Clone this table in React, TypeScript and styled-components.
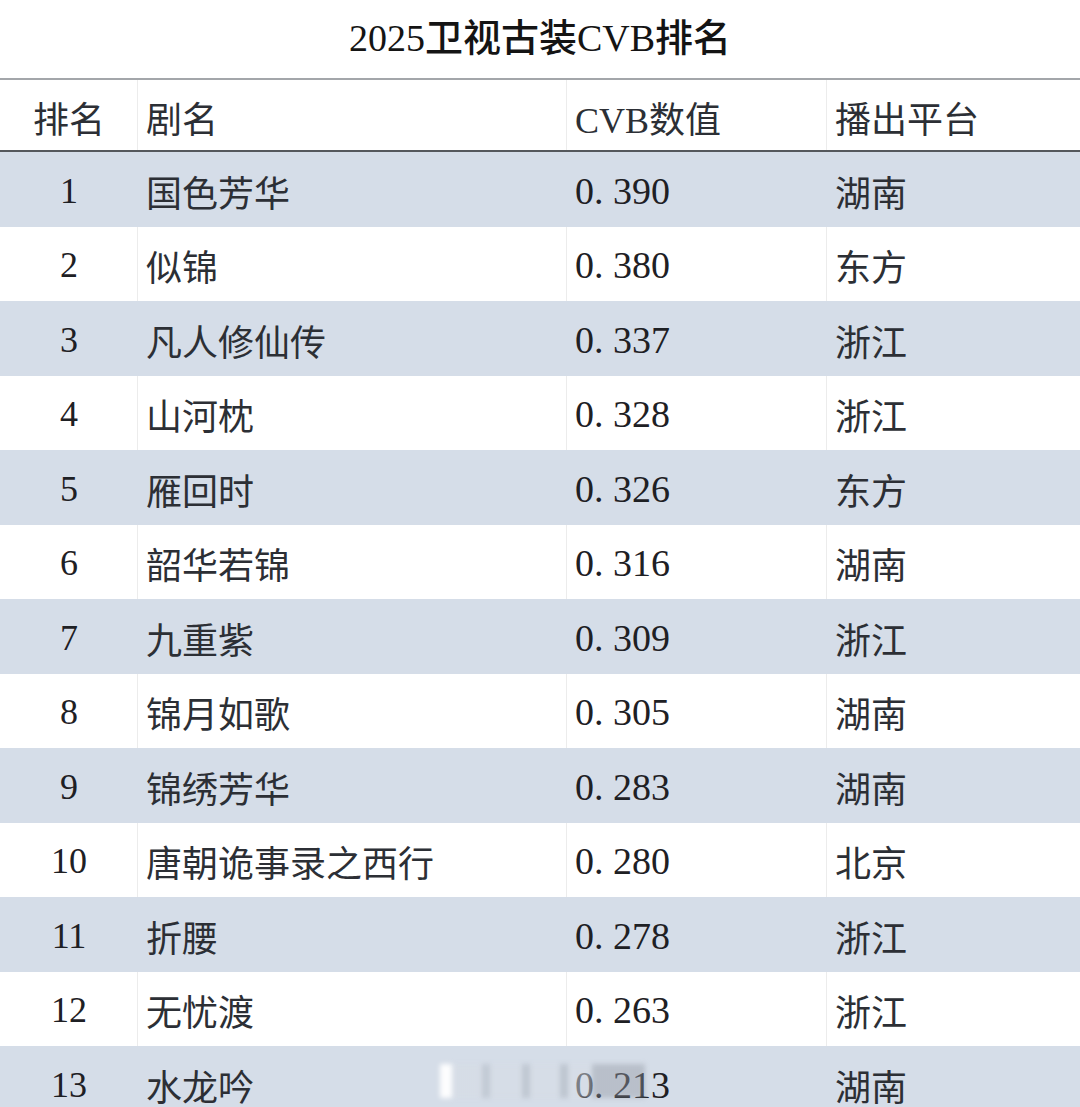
import React from "react";
import styled, { createGlobalStyle } from "styled-components";

const Global = createGlobalStyle`
  html, body { margin: 0; padding: 0; background: #ffffff; }
  body { overflow: hidden; }
`;

const FONT = `"Liberation Serif", "Noto Sans CJK SC", serif`;

const Page = styled.div`
  width: 1080px;
  height: 1107px;
  background: #ffffff;
  font-family: ${FONT};
  color: #2a2d33;
  overflow: hidden;
`;

const Title = styled.h1`
  margin: 0;
  height: 78px;
  box-sizing: border-box;
  padding-bottom: 10px;
  display: flex;
  align-items: center;
  justify-content: center;
  font-size: 38px;
  font-weight: 500;
  color: #141414;
`;

const Table = styled.div`
  display: flex;
  flex-direction: column;
`;

const HeaderRow = styled.div`
  display: grid;
  grid-template-columns: 137px 429px 260px 1fr;
  height: 74px;
  box-sizing: border-box;
  border-top: 2px solid #a3a6aa;
  border-bottom: 2px solid #55585c;
  background: #ffffff;
`;

const Row = styled.div<{ $shaded: boolean }>`
  position: relative;
  display: grid;
  grid-template-columns: 137px 429px 260px 1fr;
  height: 74.5px;
  background: ${(p) => (p.$shaded ? "#d5dde8" : "#ffffff")};
`;

const Cell = styled.div<{ $center?: boolean; $divider?: boolean }>`
  display: flex;
  align-items: center;
  justify-content: ${(p) => (p.$center ? "center" : "flex-start")};
  padding-left: ${(p) => (p.$center ? "0" : "8px")};
  padding-top: 3px;
  font-size: 36px;
  color: #2c2f35;
  border-left: 1px solid ${(p) => (p.$divider ? "#ececec" : "transparent")};
  white-space: nowrap;
`;

const Num = styled.span<{ $big?: boolean }>`
  font-size: ${(p) => (p.$big ? "38px" : "36px")};
  color: #1e2024;
`;

const Watermark = styled.div`
  position: absolute;
  left: 440px;
  top: 18px;
  width: 205px;
  height: 34px;
  filter: blur(2.5px);
  background: linear-gradient(
    90deg,
    rgba(255, 255, 255, 0.95) 0 12px,
    rgba(215, 221, 229, 0.6) 12px 42px,
    rgba(170, 178, 188, 0.45) 42px 50px,
    rgba(215, 221, 229, 0.5) 50px 82px,
    rgba(165, 173, 183, 0.45) 82px 90px,
    rgba(215, 221, 229, 0.5) 90px 120px,
    rgba(160, 168, 178, 0.45) 120px 128px,
    rgba(215, 221, 229, 0.5) 128px 152px,
    rgba(150, 156, 166, 0.45) 152px 205px
  );
`;

type Item = { rank: number; name: string; cvb: string; platform: string };

const data: Item[] = [
  { rank: 1, name: "国色芳华", cvb: "0. 390", platform: "湖南" },
  { rank: 2, name: "似锦", cvb: "0. 380", platform: "东方" },
  { rank: 3, name: "凡人修仙传", cvb: "0. 337", platform: "浙江" },
  { rank: 4, name: "山河枕", cvb: "0. 328", platform: "浙江" },
  { rank: 5, name: "雁回时", cvb: "0. 326", platform: "东方" },
  { rank: 6, name: "韶华若锦", cvb: "0. 316", platform: "湖南" },
  { rank: 7, name: "九重紫", cvb: "0. 309", platform: "浙江" },
  { rank: 8, name: "锦月如歌", cvb: "0. 305", platform: "湖南" },
  { rank: 9, name: "锦绣芳华", cvb: "0. 283", platform: "湖南" },
  { rank: 10, name: "唐朝诡事录之西行", cvb: "0. 280", platform: "北京" },
  { rank: 11, name: "折腰", cvb: "0. 278", platform: "浙江" },
  { rank: 12, name: "无忧渡", cvb: "0. 263", platform: "浙江" },
  { rank: 13, name: "水龙吟", cvb: "0. 213", platform: "湖南" },
];

export default function App() {
  return (
    <Page>
      <Global />
      <Title>2025卫视古装CVB排名</Title>
      <Table>
        <HeaderRow>
          <Cell $center>排名</Cell>
          <Cell $divider>剧名</Cell>
          <Cell $divider>CVB数值</Cell>
          <Cell $divider>播出平台</Cell>
        </HeaderRow>
        {data.map((d, i) => {
          const shaded = i % 2 === 0;
          return (
            <Row key={d.rank} $shaded={shaded}>
              <Cell $center>
                <Num>{d.rank}</Num>
              </Cell>
              <Cell $divider={!shaded}>{d.name}</Cell>
              <Cell $divider={!shaded}>
                <Num $big>{d.cvb}</Num>
              </Cell>
              <Cell $divider={!shaded}>{d.platform}</Cell>
              {d.rank === 13 && <Watermark />}
            </Row>
          );
        })}
      </Table>
    </Page>
  );
}
